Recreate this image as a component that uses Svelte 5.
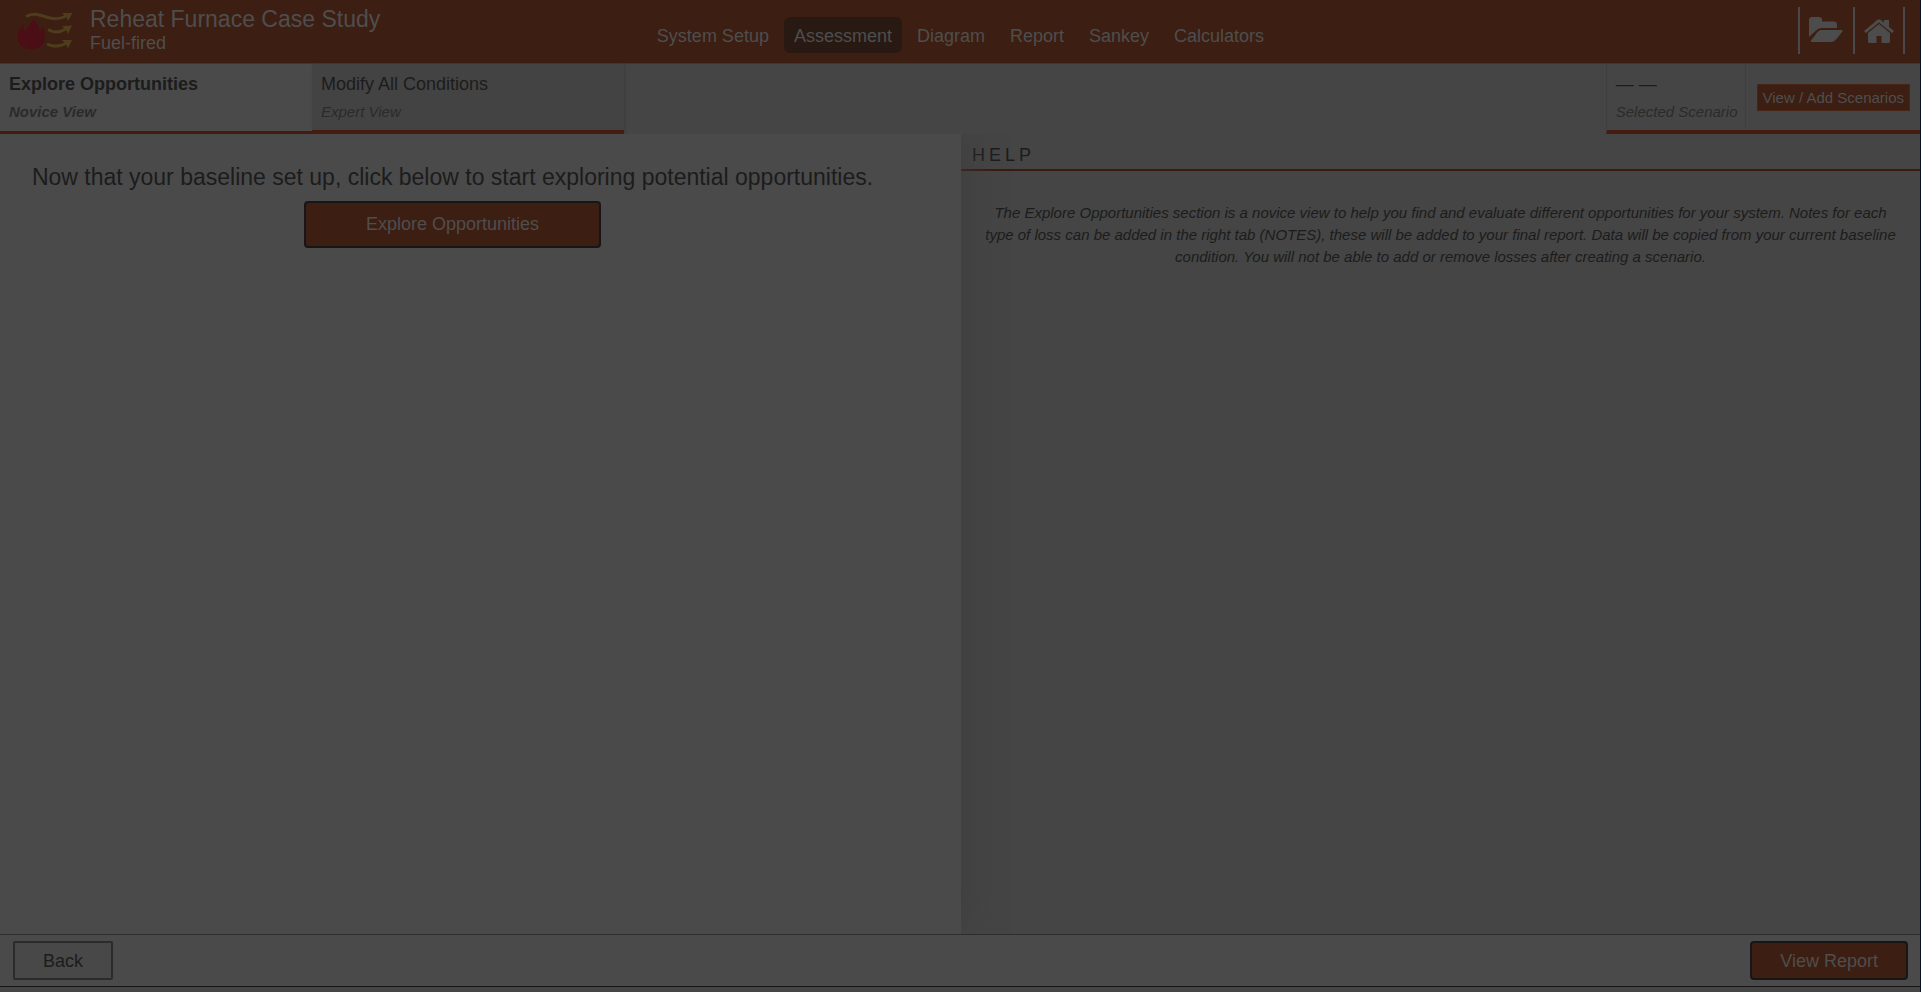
<script>
  const views = ['System Setup', 'Assessment', 'Diagram', 'Report', 'Sankey', 'Calculators'];
  let current = $state('Assessment');
</script>

<div class="page">
  <header>
    <div class="brand">
      <svg class="logo" viewBox="0 0 58 42" width="58" height="42" aria-hidden="true">
        <g fill="none" stroke="#4d3d1c" stroke-width="3">
          <path d="M9 5.500C16 1 23 4 29 6S42 9 49 5" />
          <path d="M31 18.500C36 21.500 43 21.500 49 18" />
          <path d="M30 33C36 36 43 35.500 49 32.500" />
        </g>
        <g fill="#4d3d1c">
          <path d="M45 2L55.500 2L51 10L49.500 6.500Z" />
          <path d="M45 15L55 14.500L51 23L49.500 19.500Z" />
          <path d="M45 29L55 29L51 37.500L49.500 34Z" />
        </g>
        <path d="M18.500 8C18 13 24 17 22.500 22L25.500 16C28 21 28 23 27 26C29 31 25 38 14 38C5 38 0 32 .500 25C1 20 4 16 6.500 13C6 17 7 19 9 21C10 15 14 11 18.500 8Z" fill="#4b0e17" />
        <path d="M3.500 24C4 30 8 34 15 35.500C8 36 3 31 3.500 24Z" fill="#3d1e12" />
      </svg>
      <div>
        <h1>Reheat Furnace Case Study</h1>
        <p>Fuel-fired</p>
      </div>
    </div>
    <nav>
      {#each views as view}
        <button class:active={current === view} onclick={() => (current = view)}>{view}</button>
      {/each}
    </nav>
    <div class="tools">
      <a href="#folder" aria-label="Open folder">
        <svg viewBox="0 0 34 25" width="34" height="25" aria-hidden="true">
          <path d="M0 20V3Q0 0 3 0H10Q13 0 13 3V4.500H25Q28 4.500 28 7.500V11H12Q9 11 7 13.500Z" />
          <path d="M2 25Q1 25 2 23.500L8.500 15Q10 13 12.500 13H33Q34 13 33.500 14.500L27 22.500Q25 25 22 25Z" />
        </svg>
      </a>
      <a href="#home" aria-label="Home">
        <svg viewBox="0 0 30 24" width="30" height="24" aria-hidden="true">
          <path d="M0 12L13.500 .800Q15 -.400 16.500 .800L20 3.700V1H25V7.700L30 12L28 14L15 3.500L2 14Z" />
          <path d="M4 14L15 5L26 14V22.500Q26 24 24.500 24H17.500V17H12.500V24H5.500Q4 24 4 22.500Z" />
        </svg>
      </a>
    </div>
  </header>

  <section class="tabs">
    <button class="tab selected"><span>Explore Opportunities</span><i>Novice View</i></button>
    <button class="tab"><span>Modify All Conditions</span><i>Expert View</i></button>
    <div class="scenario">
      <div class="selection"><span>— —</span><i>Selected Scenario</i></div>
      <div class="add"><button>View / Add Scenarios</button></div>
    </div>
  </section>

  <main>
    <section class="intro">
      <p>Now that your baseline set up, click below to start exploring potential opportunities.</p>
      <button class="primary">Explore Opportunities</button>
    </section>
    <aside>
      <h2>HELP</h2>
      <p>
        The Explore Opportunities section is a novice view to help you find and evaluate different
        opportunities for your system. Notes for each type of loss can be added in the right tab
        (NOTES), these will be added to your final report. Data will be copied from your current
        baseline condition. You will not be able to add or remove losses after creating a scenario.
      </p>
    </aside>
  </main>

  <footer>
    <button class="back">Back</button>
    <button class="primary">View Report</button>
  </footer>
</div>

<style>
  :global(body) {
    background: #464646;
  }
  * {
    box-sizing: border-box;
  }
  .page {
    display: flex;
    flex-direction: column;
    height: 100vh;
    border-right: 1px solid #06101e;
    background: #454545;
    color: #1c1c1c;
    font-family: "Liberation Sans", Arial, sans-serif;
    font-size: 18px;
  }
  h1, h2, p {
    margin: 0;
    font-weight: 400;
  }
  button {
    font: inherit;
    color: inherit;
    cursor: pointer;
  }
  header {
    display: grid;
    grid-template-columns: 1fr auto 1fr;
    height: 64px;
    background: #3d1e12;
    border-bottom: 1px solid #51301f;
    color: #4e4e4e;
  }
  .brand {
    display: flex;
    gap: 15px;
    padding: 5px 0 0 17px;
  }
  .logo {
    margin-top: 6px;
  }
  h1 {
    font-size: 23px;
    line-height: 28px;
  }
  .brand p {
    line-height: 20px;
  }
  nav {
    display: flex;
    gap: 5px;
    padding: 17px 0 0 1px;
  }
  nav button {
    height: 36px;
    padding: 2px 10px 0;
    border: 0;
    border-radius: 6px;
    background: none;
  }
  nav .active {
    background: #291913;
  }
  .tools {
    display: flex;
    justify-content: flex-end;
    padding: 7px 15px 9px 0;
  }
  .tools a {
    display: flex;
    padding: 10px 10px 0 9px;
    border-left: 2px solid #494949;
  }
  .tools a:last-child {
    padding: 12px 9px 0;
    border-right: 2px solid #494949;
  }
  .tools svg {
    fill: #4c4c4c;
  }
  .tabs {
    display: flex;
    height: 70px;
    flex: none;
  }
  .tab, .selection {
    display: flex;
    flex-direction: column;
    gap: 9px;
    padding: 10px 7px 0 9px;
    text-align: left;
    line-height: 20px;
  }
  .tab {
    width: 16.25%;
    border: 0;
    border-bottom: 4px solid #431e10;
    background: #434343;
  }
  .tab:nth-child(2) {
    box-shadow: 1px 0 2px #3d3d3d;
  }
  i {
    color: #2b2b2b;
    font-size: 15px;
    line-height: 18px;
  }
  .selected {
    background: #4a4a4a;
    font-weight: 700;
  }
  .tab.selected {
    border-bottom-width: 3px;
  }
  .scenario {
    display: flex;
    margin-left: auto;
    border-bottom: 4px solid #431e10;
    border-left: 1px solid #404040;
  }
  .add {
    padding: 20px 10px 0 11px;
    border-left: 1px solid #404040;
  }
  .add button {
    height: 27px;
    padding: 0 5px;
    border: 1px solid #482515;
    background: #3d1e12;
    color: #4e4e4e;
    font-size: 15px;
    line-height: 20px;
  }
  main {
    display: grid;
    grid-template-columns: 961fr 959fr;
    flex: 1;
  }
  .intro {
    display: flex;
    flex-direction: column;
    align-items: center;
    padding: 28px 56px 0 0;
    background: #4a4a4a;
    box-shadow: 0 0 40px #3d3d3d;
    clip-path: inset(0 -50px 0 0);
  }
  .intro p {
    font-size: 23px;
    line-height: 30px;
  }
  .primary {
    border: 2px solid #161616;
    border-radius: 4px;
    background: #3d1e12;
    color: #4e4e4e;
  }
  .intro .primary {
    width: 297px;
    height: 47px;
    margin-top: 9px;
  }
  h2 {
    height: 37px;
    padding: 9px 11px 0;
    border-bottom: 2px solid #3a1a12;
    font-size: 18px;
    line-height: 24px;
    letter-spacing: 4px;
  }
  aside p {
    padding: 31px 22px;
    font-size: 15px;
    font-style: italic;
    line-height: 22px;
    text-align: center;
  }
  footer {
    display: flex;
    justify-content: space-between;
    align-items: center;
    height: 53px;
    margin-bottom: 5px;
    padding: 0 12px 0 13px;
    border-top: 1px solid #2e2e2e;
    border-bottom: 1px solid #141414;
    background: #4a4a4a;
  }
  footer button {
    height: 39px;
    padding: 1px 28px 0;
  }
  .back {
    border: 2px solid #2b2b2b;
    border-radius: 2px;
    background: #484848;
  }
</style>
